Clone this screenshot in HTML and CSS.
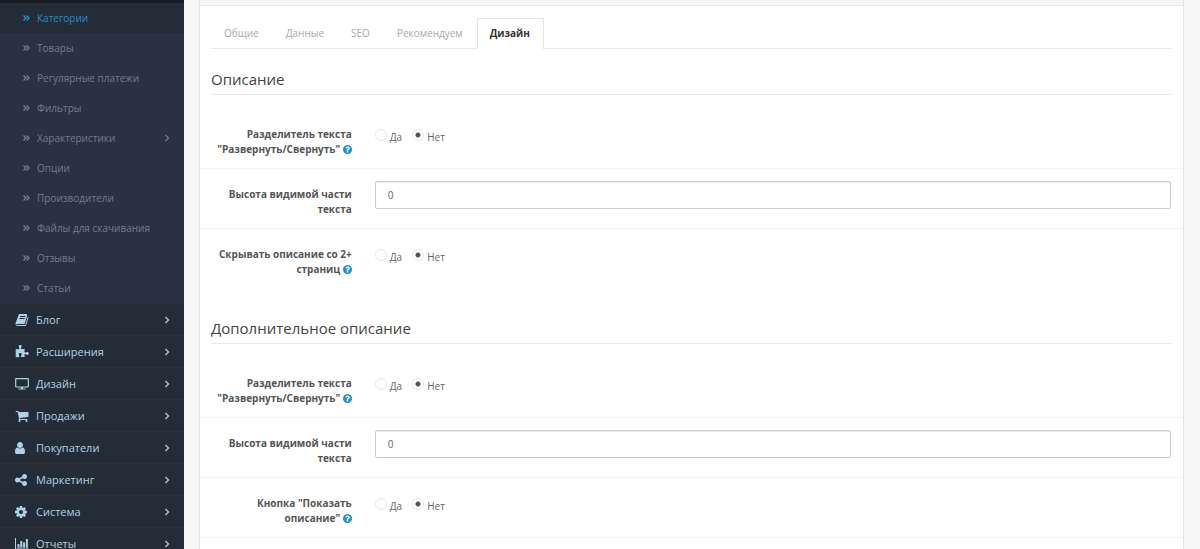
FILE: index.html
```html
<!DOCTYPE html>
<html lang="ru">
<head>
  <meta charset="UTF-8">
  <title>Категории</title>
  <meta name="viewport" content="width=device-width, initial-scale=1">
  <link rel="stylesheet" href="styles.css">
</head>
<body>

  <!-- icon sprite -->
  <svg class="sprite" aria-hidden="true">
    <symbol id="i-angle" viewBox="0 0 12 12"><path d="M4.500 3l3 3-3 3" fill="none" stroke="currentColor" stroke-width="1.300"/></symbol>
    <symbol id="i-double" viewBox="0 0 12 12"><path d="M3.500 3.500l2.500 2.500-2.500 2.500M6.500 3.500l2.500 2.500-2.500 2.500" fill="none" stroke="currentColor" stroke-width="1.400"/></symbol>
    <symbol id="i-help" viewBox="128 128 1536 1536"><path d="M1024 1376v-192q0-14-9-23t-23-9h-192q-14 0-23 9t-9 23v192q0 14 9 23t23 9h192q14 0 23-9t9-23zm256-672q0-88-55.500-163t-138.500-116-170-41q-243 0-371 213-15 24 8 42l132 100q7 6 19 6 16 0 25-12 53-68 86-92 34-24 86-24 48 0 85.500 26t37.500 59q0 38-20 61t-68 45q-63 28-115.500 86.500t-52.500 125.500v36q0 14 9 23t23 9h192q14 0 23-9t9-23q0-19 21.500-49.500t54.500-49.500q32-18 49-28.500t46-35 44.500-48 28-60.500 12.500-81zm384 192q0 209-103 385.500t-279.500 279.500-385.500 103-385.500-103-279.500-279.500-103-385.500 103-385.500 279.500-279.500 385.500-103 385.500 103 279.500 279.500 103 385.500z"/></symbol>
    <symbol id="i-book" viewBox="0 0 1792 1792"><path d="M1703 478q40 57 18 129l-275 906q-19 64-76.500 107.500t-122.500 43.500h-923q-77 0-148.500-53.500t-99.500-131.500q-24-67-2-127 0-4 3-27t4-37q1-8-3-21.500t-3-19.500q2-11 8-21t16.500-23.500 16.500-23.500q23-38 45-91.500t30-91.500q3-10 .5-30t-.5-28q3-11 17-28t17-23q21-36 42-92t25-90q1-9-2.500-32t.5-28q4-13 22-30.500t22-22.500q19-26 42.500-84.500t27.500-96.500q1-8-3-25.500t-2-26.500q2-8 9-18t18-23 17-21q8-12 16.500-30.500t15-35 16-36 19.500-32 26.500-23.500 36-11.500 47.500 5.500l-1 3q38-9 51-9h761q74 0 114 56t18 130l-274 906q-36 119-71.500 153.500t-128.500 34.500h-869q-27 0-38 15-11 16-1 43 24 70 144 70h923q29 0 56-15.500t35-41.500l300-987q7-22 5-57 38 15 59 43zm-1064 2q-4 13 2 22.500t20 9.500h608q13 0 25.500-9.500t16.500-22.500l21-64q4-13-2-22.500t-20-9.500h-608q-13 0-25.500 9.500t-16.500 22.500zm-83 256q-4 13 2 22.500t20 9.500h608q13 0 25.500-9.500t16.500-22.500l21-64q4-13-2-22.500t-20-9.500h-608q-13 0-25.500 9.500t-16.500 22.500z"/></symbol>
    <symbol id="i-puzzle" viewBox="0 0 1792 1792"><path d="M1755 1083q0 81-44.500 135t-123.500 54q-41 0-77.500-17.500t-59-38-56.500-38-71-17.500q-110 0-110 124 0 39 16 115t15 115v5q-22 0-33 1-34 3-97.500 11.500t-115.500 13.500-98 5q-61 0-103-26.500t-42-83.500q0-37 17.500-71t38-56.500 38-59 17.500-77.500q0-79-54-123.500t-135-44.500q-84 0-143 45.500t-59 127.500q0 43 15 83t33.500 64.500 33.500 53 15 50.500q0 45-46 89-37 35-117 35-95 0-245-24-9-2-27.500-4t-27.500-4l-13-2q-1 0-3-1-2 0-2-1v-1024q2 1 17.500 3.500t34 5 21.500 3.500q150 24 245 24 80 0 117-35 46-44 46-89 0-22-15-50.500t-33.500-53-33.500-64.500-15-83q0-82 59-127.500t144-45.500q80 0 134 44.500t54 123.500q0 41-17.500 77.500t-38 59-38 56.500-17.500 71q0 57 42 83.500t103 26.500q64 0 180-15t163-17v2q-1 2-3.500 17.500t-5 34-3.500 21.500q-24 150-24 245 0 80 35 117 44 46 89 46 22 0 50.500-15t53-33.500 64.500-33.500 83-15q82 0 127.500 59t45.500 143z"/></symbol>
    <symbol id="i-screen" viewBox="0 0 14 12"><path d="M1.200.6h11.600q.5 0 .5.500v7.400q0 .5-.5.500h-11.600q-.5 0-.5-.5v-7.400q0-.5.5-.5z" fill="none" stroke="currentColor" stroke-width="1.200"/><path d="M6 9h2v1.500h2.500v1h-7v-1h2.500z"/></symbol>
    <symbol id="i-cart" viewBox="0 0 1792 1792"><path d="M704 1536q0 52-38 90t-90 38-90-38-38-90 38-90 90-38 90 38 38 90zm896 0q0 52-38 90t-90 38-90-38-38-90 38-90 90-38 90 38 38 90zm128-1088v512q0 24-16.500 42.500t-40.500 21.500l-1044 122q13 60 13 70 0 16-24 64h920q26 0 45 19t19 45-19 45-45 19h-1024q-26 0-45-19t-19-45q0-11 8-31.500t16-36 21.500-40 15.500-29.500l-177-823h-204q-26 0-45-19t-19-45 19-45 45-19h256q16 0 28.500 6.500t19.500 15.500 13 24.500 8 26 5.500 29.500 4.500 26h1201q26 0 45 19t19 45z"/></symbol>
    <symbol id="i-user" viewBox="256 0 1792 1792"><path d="M1536 1399q0 109-62.500 187t-150.500 78h-854q-88 0-150.500-78t-62.500-187q0-85 8.500-160.500t31.500-152 58.500-131 94-89 134.500-34.500q131 128 313 128t313-128q76 0 134.500 34.500t94 89 58.500 131 31.500 152 8.500 160.500zm-256-887q0 159-112.500 271.500t-271.500 112.500-271.500-112.500-112.500-271.500 112.500-271.500 271.500-112.500 271.500 112.500 112.500 271.500z"/></symbol>
    <symbol id="i-share" viewBox="128 0 1792 1792"><path d="M1344 1024q133 0 226.500 93.500t93.500 226.500-93.500 226.500-226.500 93.500-226.500-93.500-93.500-226.500q0-12 2-34l-360-180q-92 86-218 86-133 0-226.500-93.500t-93.500-226.500 93.500-226.500 226.500-93.500q126 0 218 86l360-180q-2-22-2-34 0-133 93.500-226.500t226.500-93.500 226.500 93.500 93.500 226.500-93.500 226.500-226.500 93.500q-126 0-218-86l-360 180q2 22 2 34t-2 34l360 180q92-86 218-86z"/></symbol>
    <symbol id="i-cog" viewBox="128 0 1792 1792"><path d="M1152 896q0-106-75-181t-181-75-181 75-75 181 75 181 181 75 181-75 75-181zm512-109v222q0 12-8 23t-20 13l-185 28q-19 54-39 91 35 50 107 138 10 12 10 25t-9 23q-27 37-99 108t-94 71q-12 0-26-9l-138-108q-44 23-91 38-16 136-29 186-7 28-36 28h-222q-14 0-24.500-8.500t-11.500-21.500l-28-184q-49-16-90-37l-141 107q-10 9-25 9-14 0-25-11-126-114-165-168-7-10-7-23 0-12 8-23 15-21 51-66.500t54-70.500q-27-50-41-99l-183-27q-13-2-21-12.500t-8-23.500v-222q0-12 8-23t19-13l186-28q14-46 39-92-40-57-107-138-10-12-10-24 0-10 9-23 26-36 98.500-107.500t94.500-71.500q13 0 26 10l138 107q44-23 91-38 16-136 29-186 7-28 36-28h222q14 0 24.500 8.500t11.500 21.500l28 184q49 16 90 37l142-107q9-9 24-9 13 0 25 10 129 119 165 170 7 8 7 22 0 12-8 23-15 21-51 66.500t-54 70.500q26 50 41 98l183 28q13 2 21 12.500t8 23.500z"/></symbol>
    <symbol id="i-chart" viewBox="0 0 14 12"><path d="M0 0h1v10.500h13v1h-14zM2.500 6h2v3.700h-2zM5.300 3h2v6.700h-2zM8.100 4.500h2v5.200h-2zM10.900 1h2v8.700h-2z"/></symbol>
  </svg>

  <div class="layout">
    <nav class="sidebar">
      <ul class="submenu">
        <li><a href="#" class="active"><svg><use href="#i-double"/></svg>Категории</a></li>
        <li><a href="#"><svg><use href="#i-double"/></svg>Товары</a></li>
        <li><a href="#"><svg><use href="#i-double"/></svg>Регулярные платежи</a></li>
        <li><a href="#"><svg><use href="#i-double"/></svg>Фильтры</a></li>
        <li><a href="#"><svg><use href="#i-double"/></svg>Характеристики<svg class="arrow"><use href="#i-angle"/></svg></a></li>
        <li><a href="#"><svg><use href="#i-double"/></svg>Опции</a></li>
        <li><a href="#"><svg><use href="#i-double"/></svg>Производители</a></li>
        <li><a href="#"><svg><use href="#i-double"/></svg>Файлы для скачивания</a></li>
        <li><a href="#"><svg><use href="#i-double"/></svg>Отзывы</a></li>
        <li><a href="#"><svg><use href="#i-double"/></svg>Статьи</a></li>
      </ul>
      <ul class="menu">
        <li><a href="#"><svg><use href="#i-book"/></svg>Блог<svg class="arrow"><use href="#i-angle"/></svg></a></li>
        <li><a href="#"><svg><use href="#i-puzzle"/></svg>Расширения<svg class="arrow"><use href="#i-angle"/></svg></a></li>
        <li><a href="#"><svg><use href="#i-screen"/></svg>Дизайн<svg class="arrow"><use href="#i-angle"/></svg></a></li>
        <li><a href="#"><svg><use href="#i-cart"/></svg>Продажи<svg class="arrow"><use href="#i-angle"/></svg></a></li>
        <li><a href="#"><svg><use href="#i-user"/></svg>Покупатели<svg class="arrow"><use href="#i-angle"/></svg></a></li>
        <li><a href="#"><svg><use href="#i-share"/></svg>Маркетинг<svg class="arrow"><use href="#i-angle"/></svg></a></li>
        <li><a href="#"><svg><use href="#i-cog"/></svg>Система<svg class="arrow"><use href="#i-angle"/></svg></a></li>
        <li><a href="#"><svg><use href="#i-chart"/></svg>Отчеты<svg class="arrow"><use href="#i-angle"/></svg></a></li>
      </ul>
    </nav>

    <main class="content">
      <div class="panel">
        <div class="panel-heading"></div>
        <form class="panel-body">
          <ul class="tabs">
            <li><a href="#">Общие</a></li>
            <li><a href="#">Данные</a></li>
            <li><a href="#">SEO</a></li>
            <li><a href="#">Рекомендуем</a></li>
            <li><a href="#" class="active">Дизайн</a></li>
          </ul>

          <fieldset>
            <legend>Описание</legend>
            <div class="form-group">
              <div class="control-label" id="split-1">Разделитель текста "Развернуть/Свернуть" <svg class="help"><use href="#i-help"/></svg></div>
              <div class="control radios" role="radiogroup" aria-labelledby="split-1">
                <label><input type="radio" name="split1" value="1">Да</label>
                <label><input type="radio" name="split1" value="0" checked>Нет</label>
              </div>
            </div>
            <div class="form-group">
              <label class="control-label" for="height-1">Высота видимой части текста</label>
              <div class="control"><input type="text" id="height-1" class="form-control" value="0"></div>
            </div>
            <div class="form-group">
              <div class="control-label" id="hide-1">Скрывать описание со 2+ страниц <svg class="help"><use href="#i-help"/></svg></div>
              <div class="control radios" role="radiogroup" aria-labelledby="hide-1">
                <label><input type="radio" name="hide1" value="1">Да</label>
                <label><input type="radio" name="hide1" value="0" checked>Нет</label>
              </div>
            </div>
          </fieldset>

          <fieldset>
            <legend>Дополнительное описание</legend>
            <div class="form-group">
              <div class="control-label" id="split-2">Разделитель текста "Развернуть/Свернуть" <svg class="help"><use href="#i-help"/></svg></div>
              <div class="control radios" role="radiogroup" aria-labelledby="split-2">
                <label><input type="radio" name="split2" value="1">Да</label>
                <label><input type="radio" name="split2" value="0" checked>Нет</label>
              </div>
            </div>
            <div class="form-group">
              <label class="control-label" for="height-2">Высота видимой части текста</label>
              <div class="control"><input type="text" id="height-2" class="form-control" value="0"></div>
            </div>
            <div class="form-group">
              <div class="control-label" id="button-2">Кнопка "Показать описание" <svg class="help"><use href="#i-help"/></svg></div>
              <div class="control radios" role="radiogroup" aria-labelledby="button-2">
                <label><input type="radio" name="button2" value="1">Да</label>
                <label><input type="radio" name="button2" value="0" checked>Нет</label>
              </div>
            </div>
            <div class="form-group"></div>
          </fieldset>
        </form>
      </div>
    </main>
  </div>

</body>
</html>
```

FILE: styles.css
```css
* {
  box-sizing: border-box;
}
body {
  margin: 0;
  font-family: "Open Sans", "Noto Sans", sans-serif;
  font-size: 10px;
  line-height: 15px;
  color: #666;
  background: #f6f6f6;
}
ul {
  list-style: none;
  margin: 0;
  padding: 0;
}
a {
  text-decoration: none;
}
svg {
  fill: currentColor;
}
.sprite {
  display: none;
}
.layout {
  display: flex;
  height: 100vh;
  overflow: hidden;
}

/* sidebar */
.sidebar {
  flex: none;
  width: 184px;
  background: #242d37;
}
.sidebar a {
  display: flex;
  align-items: center;
}
.sidebar svg {
  flex: none;
}
.submenu {
  border-top: 3px solid #171c25;
  background: #2a3142;
}
.submenu a {
  height: 30px;
  padding: 0 11px 0 20px;
  color: #737c90;
}
.submenu svg {
  width: 12px;
  height: 12px;
  margin-right: 5px;
}
.submenu a.active {
  color: #1e91cf;
  background: #242d37;
}
.menu a {
  height: 32px;
  padding: 0 11px 0 15px;
  border-top: 1px solid #28323c;
  font-size: 11px;
  color: #b0d1e4;
}
.menu svg {
  width: 14px;
  height: 14px;
  margin-right: 7px;
}
.sidebar .arrow {
  width: 12px;
  height: 12px;
  margin: 0 0 0 auto;
}

/* content */
.content {
  flex: 1;
  display: flex;
  padding: 0 16px 0 15px;
}
.panel {
  flex: 1;
  border: 1px solid #e4e4e4;
  border-width: 0 1px;
  background: #fff;
}
.panel-heading {
  height: 6px;
  border-bottom: 1px solid #e8e8e8;
  background: #f6f6f6;
}
.panel-body {
  padding: 12px 0;
}
.tabs {
  display: flex;
  margin: 0 12px 16px 11px;
  border-bottom: 1px solid #e8e8e8;
}
.tabs a {
  display: block;
  margin-bottom: -1px;
  padding: 7px 13px 8px 12px;
  border: 1px solid transparent;
  border-bottom: 0;
  color: #aaa;
}
.tabs a.active {
  border-color: #e4e4e4;
  background: #fff;
  font-weight: bold;
  color: #333;
}
fieldset {
  min-width: 0;
  margin: 0 0 26px;
  padding: 0;
  border: 0;
}
legend {
  display: block;
  width: calc(100% - 23px);
  margin: 0 12px 13px 11px;
  padding: 0;
  border-bottom: 1px solid #e8e8e8;
  font-size: 15px;
  line-height: 29px;
  color: #444;
}
.form-group {
  display: flex;
  padding: 12px 0 11px;
  border-top: 1px solid #f3f3f3;
}
legend + .form-group {
  border-top-color: transparent;
}
.control-label {
  width: 16.66%;
  padding: 6px 12px 0 11px;
  font-weight: bold;
  text-align: right;
  color: #555;
}
.help {
  width: 9px;
  height: 9px;
  vertical-align: -1px;
  color: #1e91cf;
}
.control {
  flex: 1;
  padding: 0 12px 0 11px;
}
.form-control {
  width: 100%;
  height: 28px;
  padding: 0 12px;
  border: 1px solid #ccc;
  border-radius: 2px;
  box-shadow: inset 0 1px 1px rgba(0, 0, 0, .08);
  font: inherit;
  color: #666;
}
.radios {
  display: flex;
  align-items: flex-start;
  gap: 10px;
  padding-top: 8px;
}
.radios label {
  display: flex;
  gap: 3px;
  line-height: 16px;
}
.radios input {
  appearance: none;
  width: 12px;
  height: 12px;
  margin: 0;
  border: 1px solid #e8e8e8;
  border-radius: 50%;
}
.radios input:checked {
  background: radial-gradient(circle, #555 0 2px, transparent 3px);
}
```
